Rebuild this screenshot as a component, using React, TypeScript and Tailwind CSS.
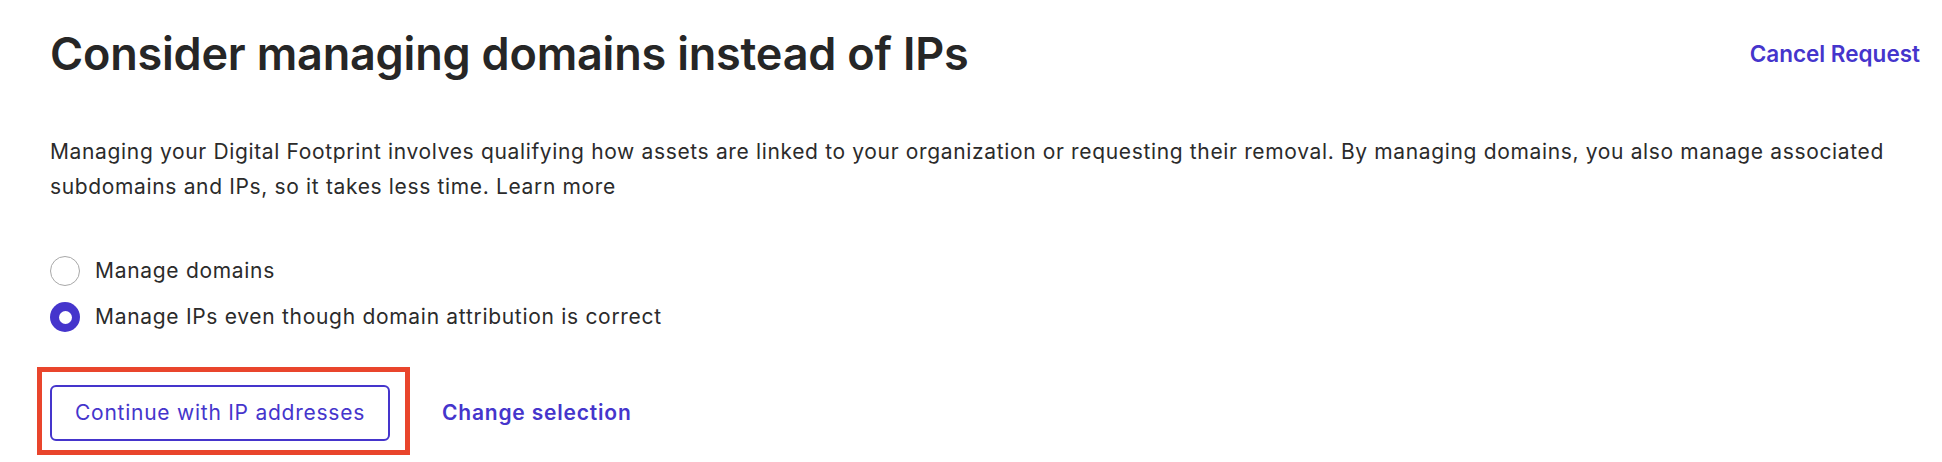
export default function App() {
  return (
    <div className="min-h-screen w-full bg-white pt-[27px] pr-[22px] pl-[50px] font-['Inter',sans-serif] text-[#2a2a2a]">
      <div className="flex items-center justify-between">
        <h1 className="text-[45px] font-semibold leading-[54px] tracking-[-0.2px] text-[#262626]">
          Consider managing domains instead of IPs
        </h1>
        <button type="button" className="text-[22.5px] font-semibold text-[#4535cc]">
          Cancel Request
        </button>
      </div>

      <p className="mt-[53px] max-w-[1860px] text-[21px] leading-[35px] tracking-[0.65px] text-[#2b2b2b]">
        Managing your Digital Footprint involves qualifying how assets are linked to your organization or requesting
        their removal. By managing domains, you also manage associated subdomains and IPs, so it takes less time. Learn
        more
      </p>

      <div className="mt-[49px] flex flex-col gap-[10px]">
        <label className="flex h-[36px] items-center gap-[15px] text-[21px] tracking-[0.7px] text-[#2b2b2b]">
          <span className="h-[30px] w-[30px] rounded-full border-[1.5px] border-[#a8a8a8] bg-white" />
          Manage domains
        </label>
        <label className="flex h-[36px] items-center gap-[15px] text-[21px] tracking-[0.7px] text-[#2b2b2b]">
          <span className="flex h-[30px] w-[30px] items-center justify-center rounded-full bg-[#4535cc]">
            <span className="h-[13px] w-[13px] rounded-full bg-white" />
          </span>
          Manage IPs even though domain attribution is correct
        </label>
      </div>

      <div className="mt-[50px] flex items-center gap-[52px]">
        <div className="relative">
          <button
            type="button"
            className="h-[56px] w-[340px] rounded-[6px] border-[2.5px] border-[#4535cc] bg-white text-[21px] tracking-[0.75px] text-[#4535cc]"
          >
            Continue with IP addresses
          </button>
          <span className="pointer-events-none absolute -top-[18px] -right-[20px] -bottom-[14px] -left-[13px] border-[5px] border-[#e9452c]" />
        </div>
        <button type="button" className="text-[21px] font-semibold tracking-[0.8px] text-[#4535cc]">
          Change selection
        </button>
      </div>
    </div>
  );
}
